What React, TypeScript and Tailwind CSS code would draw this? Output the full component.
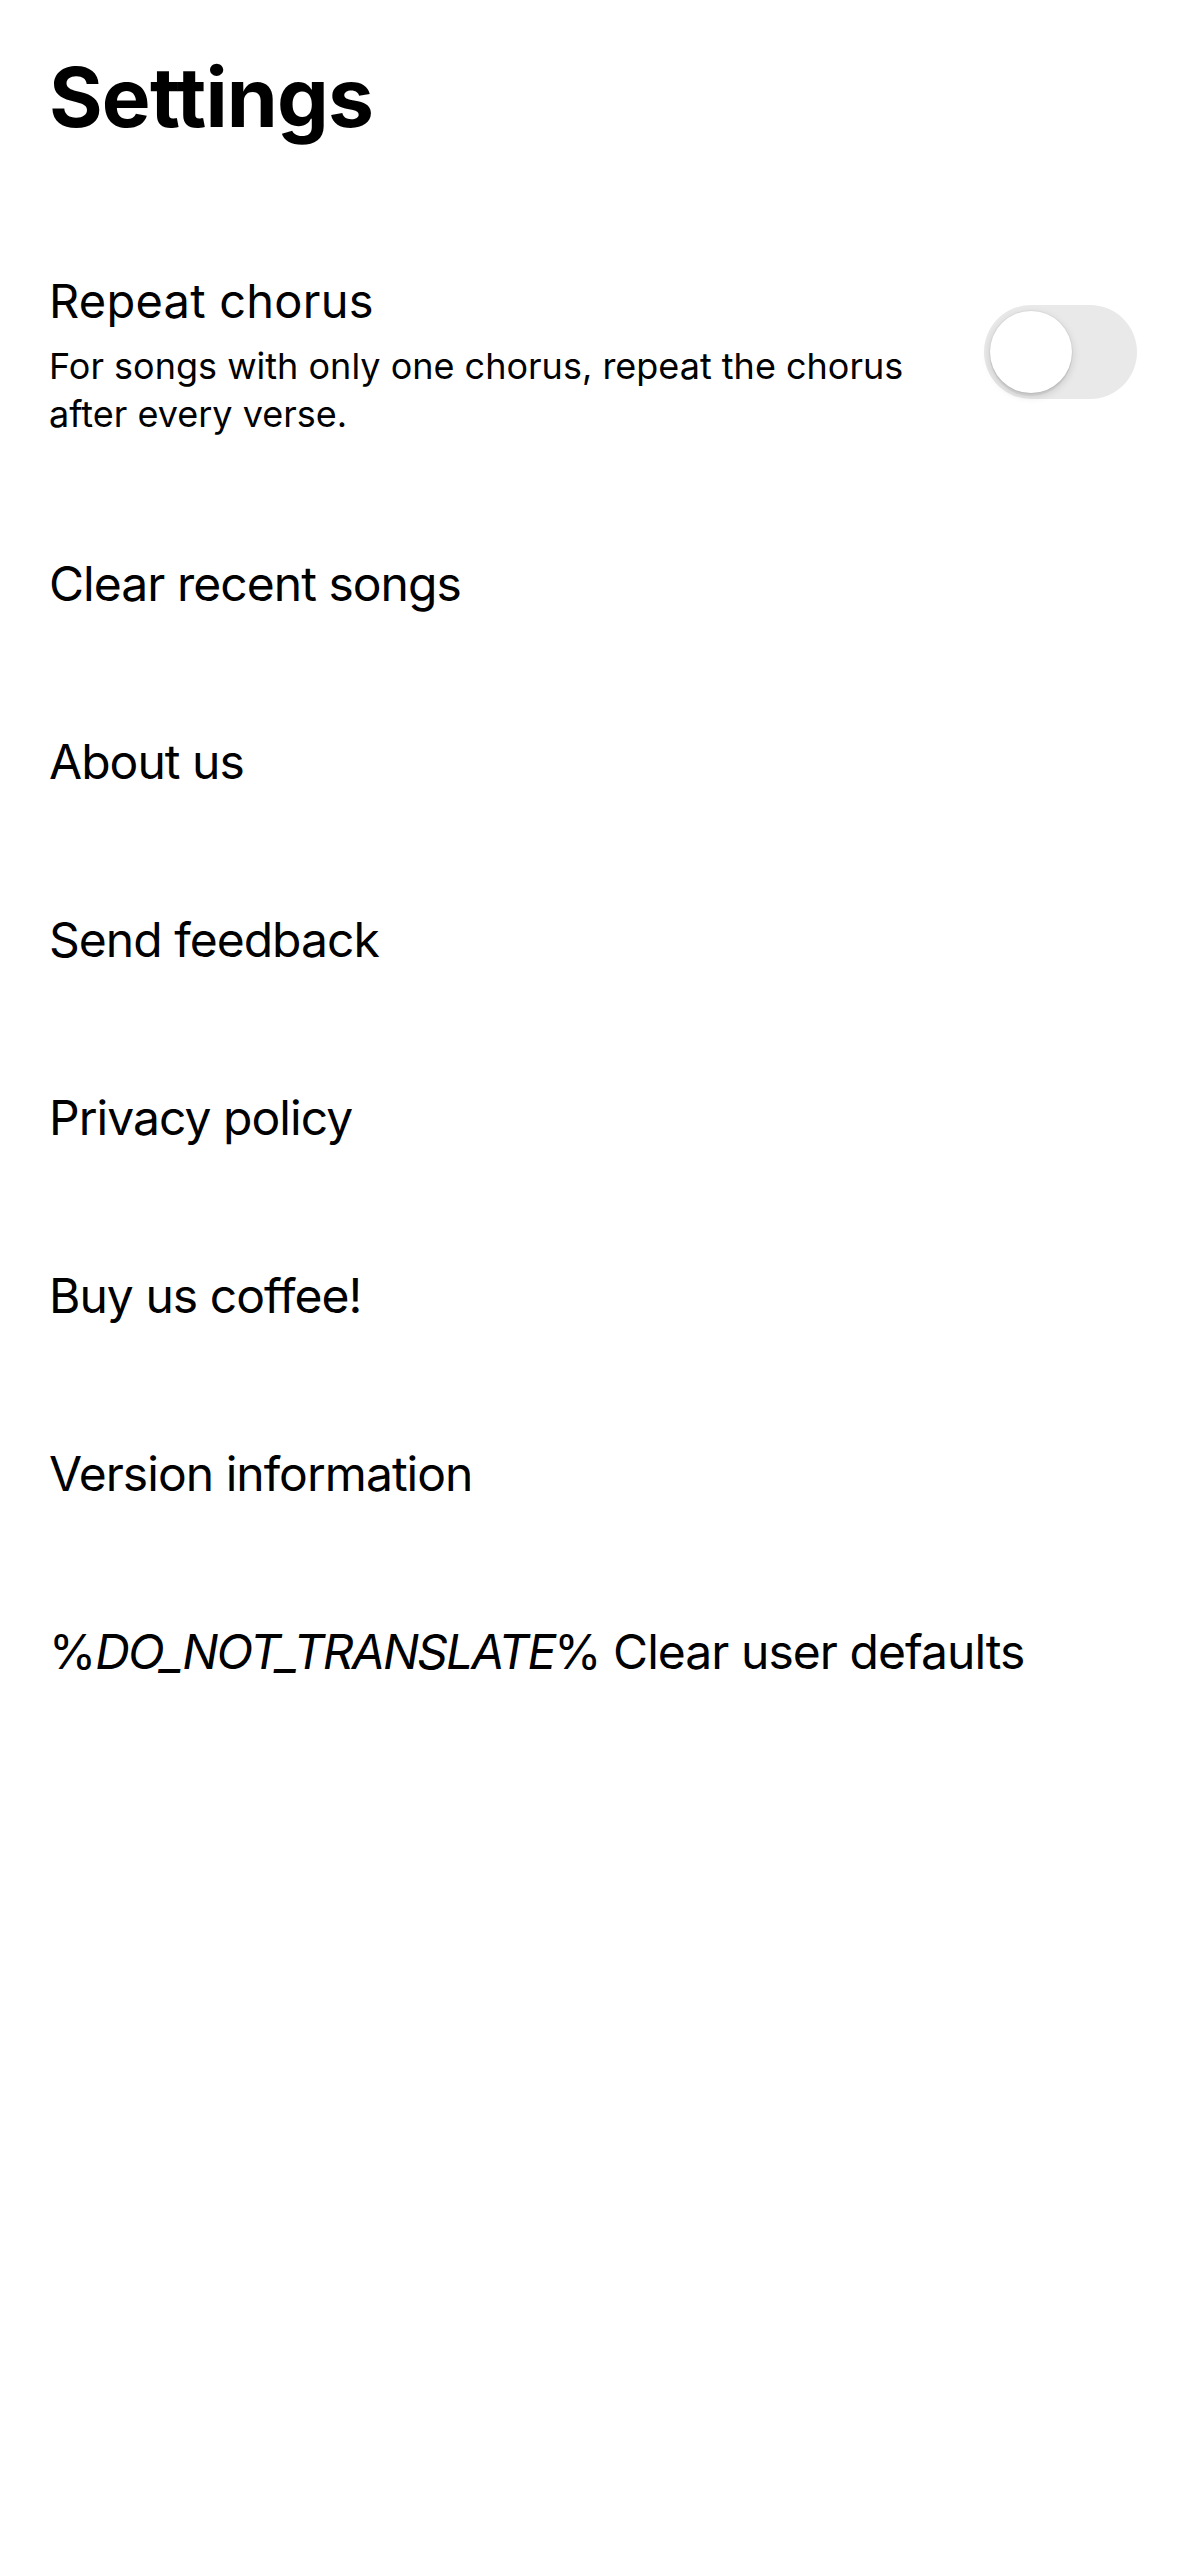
import React from 'react';

const rows = [
  'Clear recent songs',
  'About us',
  'Send feedback',
  'Privacy policy',
  'Buy us coffee!',
  'Version information',
];

const Toggle = () => {
  return (
    <div className="relative mt-[31px] h-[94px] w-[153px] shrink-0 rounded-full bg-[#e9e9ea]">
      <div className="absolute left-[6px] top-[6px] h-[82px] w-[82px] rounded-full bg-white shadow-[0_3px_8px_rgba(0,0,0,0.15),0_3px_1px_rgba(0,0,0,0.06),0_0_0_1px_rgba(0,0,0,0.04)]" />
    </div>
  );
};

const App = () => {
  return (
    <div
      className="min-h-[2556px] w-full bg-white text-black"
      style={{ fontFamily: 'Inter, "Noto Sans", sans-serif' }}
    >
      <div className="pl-[49px] pr-[42px]">
        <h1 className="mt-[57px] text-[82px] font-bold leading-[82px] tracking-[-0.01em]">Settings</h1>

        <div className="mt-[135px] flex items-start">
          <div className="flex-1 pr-[60px]">
            <div className="text-[47px] leading-[54px] tracking-[0.005em]">Repeat chorus</div>
            <p className="mt-[14px] text-[36px] leading-[48px]">
              For songs with only one chorus, repeat the chorus after every verse.
            </p>
          </div>
          <Toggle />
        </div>

        <div className="mt-[57px] flex flex-col">
          {rows.map((label) => (
            <div
              key={label}
              className="flex h-[178px] items-center whitespace-nowrap text-[48px] leading-[58px] tracking-[-0.02em]"
            >
              {label}
            </div>
          ))}
          <div className="flex h-[178px] items-center whitespace-nowrap text-[48px] leading-[58px] tracking-[-0.02em]">
            <span>
              %<em className="italic tracking-[-0.04em]">DO_NOT_TRANSLATE</em>% Clear user defaults
            </span>
          </div>
        </div>
      </div>
    </div>
  );
};

export default App;
